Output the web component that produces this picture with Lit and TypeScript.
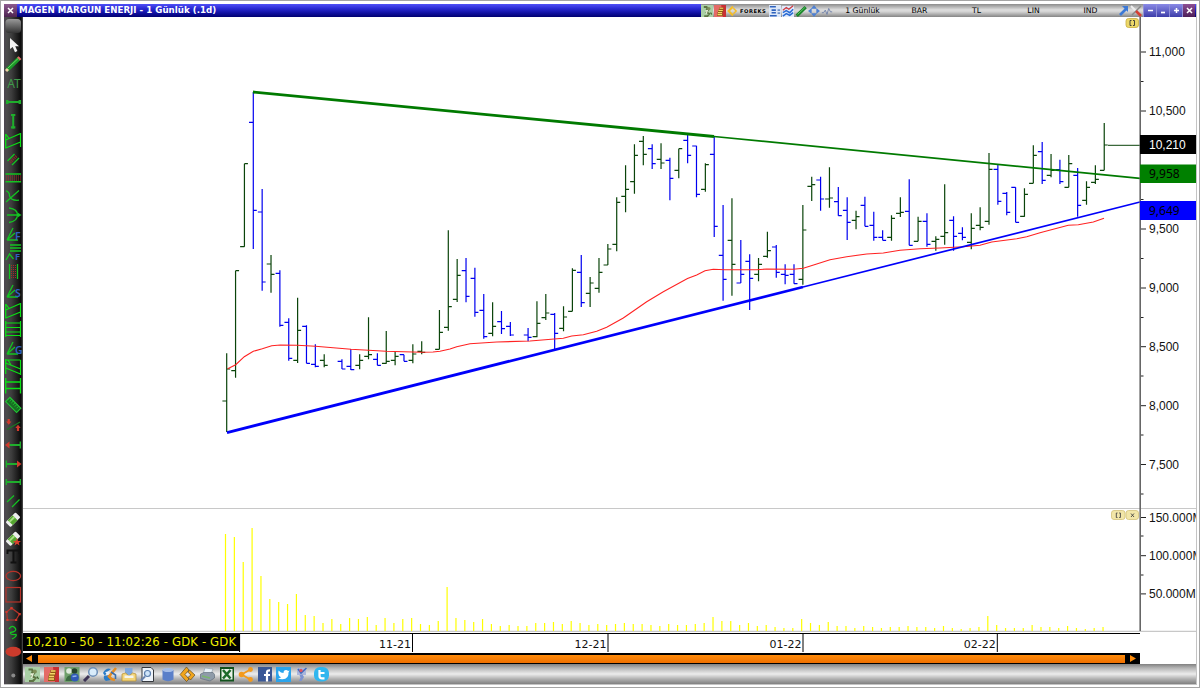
import { LitElement, html, css, svg } from 'lit';
import { customElement } from 'lit/decorators.js';

// [slot, up, open, high, low, close], vertical values are chart coordinates
const BARS: number[][] = [
  [0, 1, 401, 353.3, 432, 369], [1, 1, 370.7, 270.7, 377.7, 270.7], [2, 1, 246.7, 163.7, 246.7, 163.7],
  [3, 0, 122.3, 92, 249, 210.3], [4, 0, 212, 189, 290.7, 282], [5, 1, 264, 255, 292.7, 274.3],
  [6, 0, 273.3, 270.3, 326.7, 325.3], [7, 0, 322.3, 318.3, 360.7, 358.3], [8, 1, 360.3, 297.7, 363, 330.3],
  [9, 0, 326.3, 325.3, 363.3, 363.3], [10, 0, 364.3, 344.3, 367.3, 366.3], [11, 1, 360.3, 354.3, 367.3, 365.3],
  [13, 0, 361.3, 359.3, 369, 369], [14, 0, 366.3, 349, 370, 369.7], [15, 1, 365.3, 354.3, 369.3, 360.3],
  [16, 1, 356.3, 317.3, 359.3, 354.7], [17, 0, 359.3, 353.3, 365.3, 365.3], [18, 1, 363.3, 331, 363.7, 361.3],
  [19, 1, 360.3, 351.3, 365.3, 356.3], [20, 0, 354.7, 354.7, 361.3, 361.3], [21, 1, 360.3, 344.3, 363.3, 354],
  [22, 1, 351.3, 341.3, 354.3, 352.3], [24, 1, 349.3, 310, 349.3, 332.3], [25, 1, 327.3, 230.3, 330.7, 306.7],
  [26, 1, 299.3, 259, 302, 275.3], [27, 0, 270.7, 258, 302.3, 296.3], [28, 0, 278.3, 267.7, 316.7, 312.3],
  [29, 0, 310.3, 294, 338.7, 336.7], [30, 1, 333.3, 302.3, 336.3, 326.3], [31, 0, 321.7, 311, 334, 328.7],
  [32, 0, 326.3, 322, 336, 335], [34, 0, 335, 328, 341.3, 337.3], [35, 1, 336.7, 301.3, 337.3, 323.3],
  [36, 1, 317.7, 294, 320, 313], [37, 0, 314.3, 313, 349.3, 333.3], [38, 1, 328.3, 306.3, 331.3, 317],
  [39, 1, 311.3, 268.3, 311.3, 270.3], [40, 0, 272.3, 255, 307, 302.7], [41, 1, 293.3, 277, 307, 283],
  [42, 1, 288.3, 258, 292.7, 272.3], [43, 1, 265, 244, 265, 249], [44, 1, 244.3, 197.3, 251.3, 202.3],
  [45, 1, 196.3, 165.3, 212.3, 189.3], [46, 1, 181.7, 144.3, 193.7, 155.3], [47, 1, 141.3, 136, 165.3, 154.3],
  [48, 0, 148.7, 144.3, 169, 163.7], [49, 1, 159.3, 143.3, 169, 163], [50, 0, 160.3, 157.7, 200.3, 178.3],
  [51, 1, 170.3, 148.7, 178.3, 148.7], [52, 0, 140.3, 135, 163.3, 155.3], [53, 0, 146, 145.7, 197.3, 194.3],
  [54, 1, 189.3, 163.3, 191.7, 164.7], [55, 0, 154.3, 136, 237, 226.3], [56, 0, 255.3, 205, 300.7, 279.3],
  [57, 1, 240.3, 198.3, 295.7, 264.3], [58, 0, 283, 240, 283, 274.3], [59, 0, 261.3, 254.3, 310, 278.3],
  [60, 1, 274.3, 258, 281.3, 264.3], [61, 1, 256.3, 231.7, 257.7, 250.7], [62, 0, 247, 245, 277.7, 272.3],
  [63, 0, 274.3, 264.3, 284.3, 275.3], [64, 0, 274.3, 264.3, 283.7, 283.7], [65, 1, 279.3, 205, 284.7, 230],
  [66, 1, 186.3, 176.7, 201, 184.7], [67, 0, 180, 176.7, 210.7, 199], [68, 1, 199, 167.3, 207.7, 198],
  [69, 0, 201.7, 187, 215.7, 215.7], [70, 0, 210.3, 197.3, 240, 222.3], [71, 1, 220.3, 210.7, 229.3, 216.7],
  [72, 0, 205.3, 196.7, 226.3, 226.3], [73, 0, 225.3, 211.7, 240.7, 237.3], [74, 0, 237.3, 230.3, 240.3, 240.3],
  [75, 1, 237.3, 215.3, 240.7, 218.3], [76, 1, 213.3, 197.3, 217, 212.3], [77, 0, 211.3, 179.3, 245.3, 245.3],
  [78, 1, 241.3, 216.7, 241.3, 221.3], [79, 0, 221.3, 213.3, 246.7, 244.3], [80, 1, 241.3, 236.3, 250.7, 239.3],
  [81, 1, 236.3, 184.3, 244.7, 232.7], [82, 0, 220.3, 216.3, 250.7, 236.3], [83, 0, 233.3, 227.3, 240.3, 237.3],
  [84, 1, 242.3, 213.3, 249.3, 228.3], [85, 1, 225.3, 207.3, 230.3, 227.3], [86, 1, 221.3, 153, 224.7, 169.3],
  [87, 0, 169.3, 164, 204.7, 201.3], [88, 0, 193.3, 192, 215.3, 212.3], [89, 0, 187.3, 187.3, 222.3, 222.3],
  [90, 1, 216.3, 188.3, 216.7, 194.3], [91, 1, 183.3, 145.3, 183.3, 155.3], [92, 0, 151.7, 142, 184, 180.3],
  [93, 1, 175.3, 154, 177.3, 170.3], [94, 0, 169.7, 159.7, 184, 181.7], [95, 1, 187.3, 155, 187.3, 163.7],
  [96, 0, 175.3, 168, 216.7, 205.3], [97, 1, 200.3, 181.3, 204.7, 187.3], [98, 1, 182.3, 165.3, 184, 179.3],
  [99, 1, 170.3, 123, 170.3, 145],
];

const AVERAGE = `227.7,368.7 235.7,364.7 244.3,356.7 253.3,351.3 262.3,348.7 271.7,345.7 280.3,345 297.3,345.3
  315.3,346.3 351,349.3 386,351.3 421.7,352.3 433,352 440,351.3 450,349 456.7,346.7 470,343.7 496.7,342 530,341
  563.3,338.3 571.7,336 583.3,334.7 596.7,331.3 606.7,327.3 623.3,318 646.7,301.7 663.3,291.7 687.5,278.5
  696.7,275 705,270.7 713.3,269.3 725,269.7 756.7,269.7 766.7,269 793.3,269.3 803.3,268.3 816.7,264 830,259.7
  846.7,256.7 866.7,254 883.3,253 900,250.3 920,248.7 940,248 963.3,246.7 980,245.3 991.7,242 1016.7,238.7
  1026.7,236.7 1040,232.7 1068.3,225.3 1078.3,224.7 1093.3,222 1104,218.3`;

// bar heights of the volume panel, one per slot
const VOLUME = [
  97, 94, 69, 103, 55, 32, 29, 27, 37, 16, 15, 8, 12, 7, 13, 12, 14, 6, 13, 8, 12, 13, 7, 6, 10,
  44, 13, 11, 9, 12, 7, 5, 6, 5, 5, 8, 8, 9, 7, 10, 8, 6, 7, 6, 7, 8, 7, 7, 6, 5,
  7, 6, 6, 7, 8, 14, 10, 10, 6, 8, 5, 6, 4, 3, 3, 12, 8, 6, 9, 5, 5, 3, 5, 4, 3,
  4, 4, 5, 4, 4, 3, 5, 3, 2, 3, 4, 15, 6, 3, 3, 3, 6, 4, 4, 3, 5, 3, 2, 3, 4,
];

const PRICES: [number, string][] = [
  [52, '11,000'], [111, '10,500'], [229, '9,500'], [288, '9,000'],
  [346.7, '8,500'], [405.7, '8,000'], [464.5, '7,500'],
];
const PRICE_MINOR = [81.5, 199.5, 258.5, 317.5, 376, 435, 494];
const MONTHS = [['11-21', 412.5], ['12-21', 608], ['01-22', 803], ['02-22', 997.3]] as [string, number][];

const slotX = (i: number) => 226.7 + i * 8.864;

const G = '#14c422';
const dots = (x0: number, y0: number, cols: number, rows: number) =>
  Array.from({ length: cols * rows }, (_, i) =>
    svg`<rect x=${x0 + (i % cols) * 2} y=${y0 + Math.floor(i / cols) * 2} width="1" height="1" fill="#a3302a"/>`);
const angle = (letter: string) => svg`
  <path d="M7 15H18M7 15L13 3M7 15L15 8" stroke=${G} stroke-width="1.3"/>
  <text x="15" y="15.2" font-size="10.5" font-weight="600" fill="#2f62c4">${letter}</text>`;
const flagPole = svg`<path d="M5.7 3V17.5M20.5 2V16M5.7 3L9.5 8M5.7 9L20.5 2.5M5.7 17L20.5 11" stroke="#0be015" stroke-width="1.2"/>`;
const eraser = svg`
  <g transform="translate(0 1.8) rotate(-45 13 9)">
    <rect x="6" y="5.5" width="14" height="7" rx="1" fill="#eee"/>
    <rect x="9" y="5.5" width="7" height="7" fill="#54a52e"/>
    <rect x="9" y="7" width="7" height="2" fill="#a6dd83"/>
  </g>`;

const TOOLS = [
  svg`<rect x="5.5" y="2" width="15.5" height="14" rx="3.5" fill="url(#knob)"/>`,
  svg`<path d="M10 2V13L12.7 11L15 16.2L17.4 15.1L15.2 10.2H19Z" fill="#f2f2f2"/>`,
  svg`<path d="M7 15L19.5 3" stroke="#1b9a28" stroke-width="4"/><path d="M8 13L18 3.6" stroke="#6fd06a" stroke-width="1"/>
      <path d="M18.5 4L20 2.6" stroke="#e0696a" stroke-width="4"/><path d="M6 16L8 14" stroke="#f0d2a8" stroke-width="3"/>`,
  svg`<text x="7.2" y="14" font-size="12" fill="#3f9a4a">AT</text>`,
  svg`<path d="M6 9H21" stroke="#1fae2c" stroke-width="2"/><path d="M7.2 7V11M19.8 7V11" stroke="#1fae2c" stroke-width="2.5"/>`,
  svg`<path d="M13.2 2V16.5" stroke="#1fae2c" stroke-width="2"/><path d="M11 3H15.3M11 15.3H15.3" stroke="#1fae2c" stroke-width="2.2"/>`,
  flagPole,
  svg`<path d="M7.5 11L14.5 4M12 15L19 8" stroke=${G} stroke-width="1.3"/><path d="M10 12.5L16.5 6" stroke="#8c2b26" stroke-width="3" stroke-dasharray="1 1"/>`,
  svg`<path d="M5.5 5H21M5.5 12.7H21" stroke=${G} stroke-width="1.6"/>${dots(6, 6.5, 8, 3)}`,
  svg`<path d="M6 4Q9.5 5 9.5 9Q11 14 19 13.2M6 15L19 3.5" stroke=${G} stroke-width="1.3"/>`,
  svg`<path d="M9 2Q17.5 3 17.5 9Q17.5 15 9 16.5M7 9H19" stroke=${G} stroke-width="1.3"/><path d="M18 6.8L21.5 9L18 11.2Z" fill=${G}/>`,
  angle('F'),
  svg`<path d="M10 1H21M10 4H21M10 7H21" stroke=${G} stroke-width="1.5"/><path d="M6 16L9.5 10L13.5 15" stroke=${G} stroke-width="1.3"/>
      <text x="15" y="16" font-size="9.5" font-weight="600" fill="#2f62c4">F</text>`,
  svg`<path d="M9.5 1V16M17.5 1V16" stroke=${G} stroke-width="1.3"/>${dots(11, 2, 3, 7)}`,
  angle('S'),
  flagPole,
  svg`<path d="M5.7 1V17M20.5 1V17M5.7 3H20.5M5.7 7.5H20.5M5.7 12H20.5M5.7 15.5H20.5" stroke="#0be015" stroke-width="1.2"/>`,
  angle('G'),
  svg`<path d="M5.7 1V16M20.5 2V17M5.7 2H19L20.5 2M8 2L11 7M5.7 5L20.5 11M5.7 10L20.5 16" stroke="#0be015" stroke-width="1.2"/>`,
  svg`<path d="M5.7 1V16.5M20.5 1V16.5M5.7 5H20.5M5.7 11.5H20.5" stroke="#0be015" stroke-width="1.3"/>`,
  svg`<g transform="rotate(45 13.3 9)"><rect x="5.5" y="6" width="15.5" height="6" fill="#176f22" stroke="#23c534" stroke-width="1.1"/>
      <path d="M8 6V9M10.5 6V9M13 6V9M15.5 6V9M18 6V9" stroke="#23c534" stroke-width=".8"/></g>`,
  svg`<path d="M7 14.5L20 7" stroke="#197823" stroke-width="1.2"/><path d="M8.7 4V8M18 16V12" stroke="#d13a2d" stroke-width="2.2"/>
      <path d="M6 6.5H11.4L8.7 9.8ZM15.3 13H20.7L18 9.7Z" fill="#d13a2d"/>`,
  svg`<path d="M9 11H20" stroke="#1fae2c" stroke-width="2"/><path d="M20.3 7.5V14.5" stroke="#1fae2c" stroke-width="1.4"/><path d="M5 11L9.5 7.5V14.5Z" fill="#d13a2d"/>`,
  svg`<path d="M6.5 11H18" stroke="#1fae2c" stroke-width="2"/><path d="M6.3 7.5V14.5" stroke="#1fae2c" stroke-width="1.4"/><path d="M21.5 11L17 7.5V14.5Z" fill="#d13a2d"/>`,
  svg`<path d="M6.5 10H20" stroke="#1fae2c" stroke-width="2"/><path d="M6.3 7V13M20.3 7V13" stroke="#1fae2c" stroke-width="1.4"/>`,
  svg`<path d="M7 12L14 5.5M12 17L19.5 9.5" stroke=${G} stroke-width="1.2"/>`,
  eraser,
  svg`${eraser}<path d="M17 10L18 13H21L18.7 14.7L19.5 17.5L17 15.8L14.5 17.5L15.3 14.7L13 13H16Z" fill="#d8412f"/>`,
  svg`<path d="M7.5 7V3.5H19.5V7M13.5 3.5V15M10.5 15.5H16.5" stroke="#111" stroke-width="2"/>`,
  svg`<ellipse cx="13.3" cy="10" rx="7.3" ry="4.7" stroke="#b5332a" stroke-width="1.3"/>`,
  svg`<rect x="6" y="2.5" width="14.5" height="14.5" stroke="#b5332a" stroke-width="1.2"/>`,
  svg`<path d="M11.5 4L19.5 10L16 16H7.5L6.5 8Z" stroke="#b5332a" stroke-width="1.2"/>
      <path d="M10.3 3H12.7V5.4H10.3ZM18.5 9H20.8V11.2H18.5ZM15 15H17.2V17H15ZM6.3 15H8.5V17H6.3ZM5.4 7H7.6V9H5.4Z" fill="#d13a2d"/>`,
  svg`<path d="M9 6Q12 1 15.5 5.5Q17 8.5 10.5 9.5Q9.5 12 16 11.5Q17.5 13 12 16" stroke=${G} stroke-width="1.3"/>`,
  svg`<ellipse cx="13.3" cy="9.8" rx="7.8" ry="5" fill="#cb3b2c"/>`,
  svg`<circle cx="13.3" cy="14.5" r="2" fill="#8a8a8a"/>`,
];

// 15x15 glyphs
const walker = svg`<rect width="15" height="15" fill="#a9cfa5"/><path d="M3.5 2.5H7L8 4.5L6.5 6M9.5 5.5L7 9L10.5 11L8 14H4" stroke="#5d7443" stroke-width="2.2"/>
  <circle cx="9.8" cy="4.5" r="2.1" fill="#7d8f58"/><path d="M5.5 7.5L8 7L6.5 11" stroke="#e8efd8" stroke-width="1.4"/><path d="M12 9.5L13.5 12" stroke="#3b5f2d" stroke-width="1.3"/>`;
const coins = svg`<rect width="15" height="15" fill="#e46a66"/><path d="M9 0H15V15H11Z" fill="#c92f33"/><path d="M4 12.5H11M4.5 10H10.5M5 7.3H11.5M6.5 4.5H12" stroke="#8c5a12" stroke-width="2.8"/><path d="M4.5 12H10M5 9.5H10M5.5 6.8H11M7 4H11.5" stroke="#f6d568" stroke-width="1.4"/>`;
const SHARE = [
  { x: 25, art: walker },
  { x: 44, art: coins },
  { x: 64.5, art: svg`<rect width="15" height="15" fill="#6f9f6b"/><circle cx="4.5" cy="4" r="2.8" fill="#dfe9dc"/><circle cx="10" cy="4" r="2.8" fill="#26442c"/><path d="M1 14Q2 8 7 8L8 14Z" fill="#3c6b42"/><circle cx="10.3" cy="10.5" r="4" fill="#3159b8"/><path d="M8 9.5L12 9" stroke="#8db2ea" stroke-width="1.4"/>` },
  { x: 83, art: svg`<path d="M1 14L6 9" stroke="#3d3355" stroke-width="3"/><circle cx="10" cy="5" r="4.3" fill="#d9ecfb" stroke="#6d8fb8" stroke-width="1.5"/>` },
  { x: 102, art: svg`<path d="M1 6Q4 0 9 2L5 5L3 9ZM4 14Q1 12 2 9L7 8L9 13Z" fill="#2b7cc8"/><path d="M3 5L7 4.5L6 8Z" fill="#eaf3fc"/><path d="M14 1L7 9.5L9.5 12L13 13" stroke="#e58d23" stroke-width="2.6"/><path d="M9 5L13.5 8V12" stroke="#3a6eac" stroke-width="1.6"/>` },
  { x: 121.5, art: svg`<path d="M3.5 1H11V8H3.5Z" fill="#7ea8df"/><path d="M0.5 7L4 6L7.5 9L11 6L14.5 7V14H.5Z" fill="#f3d57a" stroke="#b48c2d" stroke-width=".7"/><path d="M3 8.5H12V11H3Z" fill="#f5f5ee"/>` },
  { x: 140, art: svg`<path d="M2 .5H11L13.5 3V14.5H2Z" fill="#eef4fb" stroke="#35383d" stroke-width="1"/><circle cx="7.5" cy="6.5" r="3" fill="#cfe5fa" stroke="#5b7fae" stroke-width="1.2"/><path d="M1 13.5L5 9.5" stroke="#6781ac" stroke-width="1.8"/>` },
  { x: 160.5, art: svg`<path d="M2 3V12.5Q7.5 16 13 12.5V3Z" fill="#5a7fc9"/><ellipse cx="7.5" cy="3" rx="5.5" ry="2" fill="#a5bde8"/>` },
  { x: 180, art: svg`<path d="M6.5 0L0 7.5L6.5 14.5L9 12L5 7.5L9 3Z" fill="#f1a51c" stroke="#4a3712" stroke-width=".6"/><path d="M9.5 3L15 8L10.5 13L8 10.5L10.8 8L8 5.2Z" fill="#f1a51c" stroke="#4a3712" stroke-width=".6"/>` },
  { x: 200, art: svg`<path d="M5 1L13 2L11 7H3Z" fill="#e9f0f7" stroke="#8798a8" stroke-width=".6"/><path d="M.5 7L4 5.5H13L14.5 7.5V11L10 14L.5 11.5Z" fill="#8e9ba9" stroke="#576472" stroke-width=".6"/><path d="M2 9L10 11" stroke="#79b66d" stroke-width="1.5"/>` },
  { x: 219.5, art: svg`<rect x=".5" y="0" width="14" height="14.5" fill="#11521d"/><rect x="2" y="2" width="11" height="10.5" fill="#e9f2e8"/><path d="M3.5 3L11 11.5M11 3L3.5 11.5" stroke="#1c6b29" stroke-width="2.6"/>` },
  { x: 238.5, art: svg`<path d="M3 7.5L12 2.5M3 7.5L12 12.5" stroke="#f39a1d" stroke-width="2"/><circle cx="3" cy="7.5" r="2.8" fill="#f39a1d"/><circle cx="12" cy="2.5" r="2.4" fill="#f39a1d"/><circle cx="12" cy="12.5" r="2.4" fill="#f39a1d"/>` },
  { x: 258, art: svg`<rect width="14" height="14.5" fill="#395796"/><path d="M9 14.5V5Q9 3.2 12 3.3M6 8H12" stroke="#fff" stroke-width="2.2"/>` },
  { x: 276, art: svg`<rect width="15" height="15" fill="#2aa4ec"/><path d="M2.5 3.5Q5 6 7.5 6Q7.5 3 10 3Q11.5 3 12 4L13.5 3.5L12.5 5.5Q13 12 6.5 12.3Q4 12.4 2 11.2Q4.5 11 5 10.2Q3 9.5 2.8 8Q2 6 2.5 3.5Z" fill="#fff"/>` },
  { x: 294.5, art: svg`<rect x="2.5" y="1" width="9" height="7" fill="#a9b6dc"/><path d="M3.5 2L6.5 6L12 1" stroke="#4269bd" stroke-width="1.6"/><path d="M5 8L8 7.5L9.5 10L7 14H4.5L6 10.5Z" fill="#7d93d0"/><circle cx="6.5" cy="3.5" r="1.7" fill="#dd5661"/>` },
  { x: 314, art: svg`<rect width="15" height="14.5" rx="6" fill="#30b6ee"/><path d="M5.5 3V9Q5.5 11.3 8 11.3H10.5M5.5 6H10.5" stroke="#fff" stroke-width="2.2"/>` },
];

const QUICK = [
  walker,
  coins,
  svg`<path d="M7.5 2L2 7.5L7.5 13" stroke="#f5bd26" stroke-width="2.6"/><path d="M8 4L11.5 7.5L8 11" stroke="#f5bd26" stroke-width="1.8"/>`,
];
const STUDIES = [
  svg`<rect width="14" height="14" fill="#dce7f7"/><path d="M1 2H8M3 6H8M3 9H8M1 12.5H9" stroke="#2e62bd" stroke-width="1.8"/><path d="M10 6H13M10 9.5H13" stroke="#6b8fc9" stroke-width="1.8"/>`,
  svg`<rect y="1" width="14" height="13" fill="#dfeafc"/><path d="M1 6L5 3L8 5L13 1" stroke="#d03c41" stroke-width="1.5"/><path d="M1 9L5 6.5L9 9L13 5M1 13L5 10L9 12L13 9" stroke="#2b6cd3" stroke-width="1.8"/>`,
  svg`<path d="M2 12.5L12.5 2.5" stroke="#18852a" stroke-width="3.8"/><path d="M3 11L11.5 3" stroke="#6ed06d" stroke-width="1"/>`,
  svg`<path d="M7 0L10.5 4.3H3.5ZM7 14L10.5 9.7H3.5ZM0 7L4.3 3.5V10.5ZM14 7L9.7 3.5V10.5Z" fill="#4e80d2"/>`,
  svg`<path d="M1 9H3L5 6L7 11L9 4L11 8H13" stroke="#7182aa" stroke-width="1.1"/>`,
];

@customElement('app-root')
export class AppRoot extends LitElement {
  static styles = css`
    :host {
      display: block;
      width: 1200px;
      height: 688px;
      box-sizing: border-box;
      border: 1px solid #a5a5a5;
      background: #fff;
      padding: 3px 3px 2px 3px;
      overflow: hidden;
      font-family: "DejaVu Sans", Verdana, sans-serif;
      color: #000;
    }

    .window {
      display: flex;
      flex-direction: column;
      width: 1193px;
      height: 681px;
      border-right: 1px solid #c4c4c4;
      border-bottom: 1px solid #c4c4c4;
      box-sizing: border-box;
    }

    svg {
      display: block;
      fill: none;
    }

    .title {
      display: flex;
      height: 13px;
      flex: none;
      background: linear-gradient(#5050f8, #2a2ad2 35%, #1010a0 70%, #000070);
    }

    .close, .btn {
      width: 13px;
      height: 13px;
      display: grid;
      place-items: center;
      background: linear-gradient(#8d5a8f, #4d2350);
    }

    .btn {
      background: linear-gradient(#8a8ae6, #3d3da9);
      border-left: 1px solid #8f8fd8;
      box-sizing: border-box;
    }

    .btn.end {
      background: linear-gradient(#8d4f93, #4d1e58);
    }

    .name {
      width: 684px;
      padding-left: 2px;
      box-sizing: border-box;
      color: #fff;
      font-size: 8.7px;
      font-weight: bold;
      line-height: 13px;
      white-space: nowrap;
    }

    .silver {
      display: flex;
      align-items: center;
      width: 442px;
      background: linear-gradient(#8c8c8c, #dedede 45%, #d2d2d2 60%, #858585);
    }

    .silver svg {
      margin-right: 1px;
    }

    .brand {
      width: 29px;
      font-size: 5.2px;
      font-weight: bold;
      letter-spacing: .5px;
    }

    .menu {
      font-size: 7.7px;
      width: 57px;
      text-align: center;
    }

    .body {
      display: flex;
      flex: 1;
      min-height: 0;
    }

    .tools {
      width: 19px;
      flex: none;
      background: linear-gradient(90deg, #4c4650, #4b4b4b 15%, #3c3c3c 40%, #0a0a0a 90%, #555);
      font-family: "Noto Sans", sans-serif;
    }

    .tools svg {
      height: 18.95px;
      width: 19px;
    }

    .main {
      flex: 1;
      display: flex;
      flex-direction: column;
      min-width: 0;
    }

    .axis {
      font-family: "Liberation Sans", Arial, sans-serif;
      font-size: 12px;
      fill: #111;
    }

    .tag {
      font-family: "Noto Sans", sans-serif;
      fill: #000;
    }

    .dates {
      display: flex;
      height: 21px;
      flex: none;
    }

    .last {
      width: 216px;
      height: 18px;
      margin-top: 1px;
      background: #000;
      color: #ee0;
      font-size: 11.7px;
      line-height: 18px;
      padding-left: 2.5px;
      box-sizing: border-box;
      white-space: nowrap;
      letter-spacing: 0.13px;
    }

    .scroll {
      display: flex;
      align-items: center;
      width: 1117px;
      height: 11px;
      flex: none;
      background: #000;
    }

    .thumb {
      flex: 1;
      height: 8px;
      margin: 0 5px;
      background: linear-gradient(#ff8c0a, #f07000);
    }

    .share {
      display: flex;
      flex: 1;
      align-items: center;
      background: linear-gradient(#808080, #b4b4b4 20%, #ececec 50%, #b0b0b0 75%, #808080);
    }
  `;

  render() {
    return html`
      <div class="window">
        ${this.renderTitle()}
        <div class="body">
          <div class="tools">${TOOLS.map((t, i) => html`
            <svg viewBox="4 0 19 18.95">
              ${i === 0 ? svg`<defs><linearGradient id="knob" x2="0" y2="1"><stop stop-color="#999"/><stop offset="1" stop-color="#333"/></linearGradient></defs>` : ''}
              ${t}
            </svg>`)}
          </div>
          <div class="main">
            ${this.renderPrices()}
            ${this.renderVolume()}
            <div class="dates">
              <div class="last">10,210 - 50 - 11:02:26 - GDK - GDK</div>
              <svg width="957" height="21" viewBox="239 632 957 21">
                <path d="M239 633.5H1140M239.5 633V652" stroke="#000" stroke-width="1.2"/>
                ${MONTHS.map(([m, x]) => svg`
                  <path d="M${x} 634V652" stroke="#000" stroke-width="1"/>
                  <text x=${x - 1.5} y="647.5" text-anchor="end" font-size="11" fill="#111">${m}</text>`)}
              </svg>
            </div>
            <div class="scroll">
              <svg width="10" height="11"><path d="M9 2V9L3 5.5Z" fill="#ff8c0a"/></svg>
              <div class="thumb"></div>
              <svg width="10" height="11"><path d="M0 2V9L6 5.5Z" fill="#ff8c0a"/></svg>
            </div>
            ${this.renderShare()}
          </div>
        </div>
      </div>
    `;
  }

  renderTitle() {
    return html`
      <div class="title">
        <div class="close"><svg width="7" height="7"><path d="M1 1L6 6M6 1L1 6" stroke="#fff" stroke-width="1.5"/></svg></div>
        <div class="name">MAGEN MARGUN ENERJI - 1 Günlük (.1d)</div>
        <div class="silver">
          ${QUICK.map(q => html`<svg width="12" height="12" viewBox="0 0 15 15">${q}</svg>`)}
          <span class="brand">FOREKS</span>
          ${STUDIES.map(q => html`<svg width="12" height="12" viewBox="0 0 14 14">${q}</svg>`)}
          ${['1 Günlük', 'BAR', 'TL', 'LIN', 'IND'].map(m => html`<span class="menu">${m}</span>`)}
          <svg width="10" height="11"><path d="M1 10L7 4" stroke="#3c79d6" stroke-width="2.6"/><path d="M3 1H9V7Z" fill="#3c79d6"/></svg>
          <svg width="12" height="12"><path d="M1 1L8 8" stroke="#eee" stroke-width="2"/><path d="M11 1L2 10" stroke="#888" stroke-width="1.5"/><path d="M6 6L11 11" stroke="#d73f32" stroke-width="2.6"/></svg>
        </div>
        <div class="btn"><svg width="7" height="7"><path d="M1 3.5H6" stroke="#fff" stroke-width="1.5"/></svg></div>
        <div class="btn"><svg width="7" height="7"><path d="M1 5.5H5" stroke="#fff" stroke-width="1.7"/></svg></div>
        <div class="btn"><svg width="7" height="7"><path d="M1 3.5H6M3.5 1V6" stroke="#fff" stroke-width="1.5"/></svg></div>
        <div class="btn end"><svg width="7" height="7"><path d="M1 1L6 6M6 1L1 6" stroke="#fff" stroke-width="1.5"/></svg></div>
      </div>
    `;
  }

  renderPrices() {
    return html`
      <svg width="1173" height="491" viewBox="23 17 1173 491">
        ${BARS.map(([i, up, o, h, l, c]) => {
          const x = slotX(i);
          return svg`<path d="M${x} ${h}V${l}M${x - 4.3} ${o}H${x}M${x} ${c}H${x + 3.5}"
            stroke=${up ? '#0a440a' : '#0000f0'} stroke-width="1.2"/>`;
        })}
        <polyline points=${AVERAGE} stroke="#f22" stroke-width="1.1"/>
        <path d="M253 92L714 136.5" stroke="#007a00" stroke-width="2.8"/>
        <path d="M714 136.5L1140 178.3" stroke="#007a00" stroke-width="1.7"/>
        <path d="M227 432.6L803 287" stroke="#0000fa" stroke-width="2.8"/>
        <path d="M803 287L1140 202" stroke="#0000fa" stroke-width="1.7"/>
        <path d="M1108 145.3H1140" stroke="#0a440a" stroke-width="1"/>
        <path d="M1140.2 17V508" stroke="#666" stroke-width="1.6"/>
        <g class="axis">
          ${PRICE_MINOR.map(y => svg`<path d="M1141 ${y}H1143.5" stroke="#222"/>`)}
          ${PRICES.map(([y, t]) => svg`<path d="M1141 ${y}H1146" stroke="#222"/><text x="1149" y=${y + 4.2}>${t}</text>`)}
          <rect x="1140" y="135" width="56" height="19" fill="#000"/>
          <text x="1149" y="149" fill="#fff">10,210</text>
          <rect x="1140" y="164.5" width="56" height="18.5" fill="#008000"/>
          <text class="tag" x="1149" y="178.3">9,958</text>
          <rect x="1140" y="201" width="56" height="19" fill="#0000ff"/>
          <text class="tag" x="1149" y="215.3">9,649</text>
        </g>
        <rect x="1126" y="18.5" width="12.5" height="9" rx="2.5" fill="#ecd768" stroke="#c9ad3f" stroke-width=".8"/>
        <path d="M1131.5 20.5H1130V25.5H1131.5M1133 20.5H1134.5V25.5H1133" stroke="#333" stroke-width=".9"/>
      </svg>
    `;
  }

  renderVolume() {
    return html`
      <svg width="1173" height="124" viewBox="23 508 1173 124">
        <path d="M23 508.4H1196M23 631.5H1196" stroke="#c8c8c8" stroke-width="1.4"/>
        ${VOLUME.map((v, i) => svg`<path d="M${slotX(i) - 1.2} 631V${631 - v}" stroke="#ff0" stroke-width="1.2"/>`)}
        <path d="M1140.2 508V631" stroke="#666" stroke-width="1.6"/>
        <g class="axis">
          ${[536, 575].map(y => svg`<path d="M1141 ${y}H1143.5" stroke="#222"/>`)}
          ${['150.000M', '100.000M', '50.000M'].map((t, i) => svg`
            <path d="M1141 ${517.5 + i * 38.2}H1146" stroke="#222"/><text x="1149" y=${521.7 + i * 38.2}>${t}</text>`)}
        </g>
        <rect x="1111.5" y="510.5" width="13.5" height="9" rx="2.5" fill="#f2e6a8" stroke="#d3c27a" stroke-width=".8"/>
        <rect x="1126" y="510.5" width="12.5" height="9" rx="2.5" fill="#f2e6a8" stroke="#d3c27a" stroke-width=".8"/>
        <path d="M1117.5 513H1116.3V517.5H1117.5M1119.2 513H1120.4V517.5H1119.2M1131 513.5L1134 517M1134 513.5L1131 517" stroke="#444" stroke-width=".9"/>
      </svg>
    `;
  }

  renderShare() {
    return html`
      <div class="share">
        <svg width="320" height="16" viewBox="23 0 320 16">
          ${SHARE.map(s => svg`<g transform="translate(${s.x} 1)">${s.art}</g>`)}
        </svg>
      </div>
    `;
  }
}
